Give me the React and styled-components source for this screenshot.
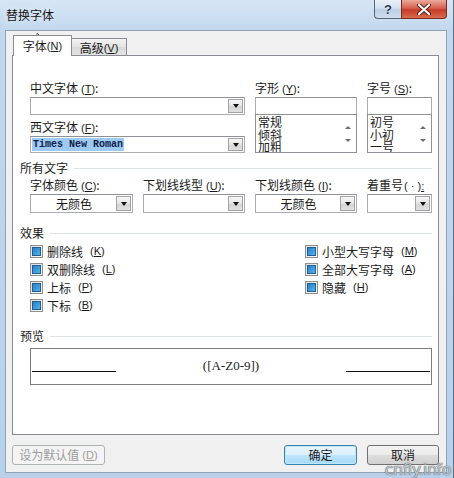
import React from 'react';
import styled, { createGlobalStyle, css } from 'styled-components';

const GlobalStyle = createGlobalStyle`
  html, body {
    margin: 0;
    padding: 0;
    background: #b9d1ea;
  }
  * {
    box-sizing: border-box;
  }
`;

const ui = `"Noto Sans CJK SC", "Liberation Sans", sans-serif`;

const Window = styled.div`
  position: relative;
  width: 454px;
  height: 478px;
  overflow: hidden;
  background: linear-gradient(180deg, #d6e5f5 0%, #c3d8ee 30px, #b8d0ea 100%);
  border-right: 1px solid #5d728b;
  font-family: ${ui};
  font-size: 12px;
  color: #1b1b1b;
`;

const TitleBar = styled.div`
  height: 30px;
  display: flex;
  justify-content: space-between;
  align-items: flex-start;
  padding: 0 6px 0 6px;
`;

const Title = styled.div`
  margin-top: 7px;
  line-height: 16px;
  font-size: 12px;
  color: #141414;
  text-shadow: 0 0 6px #eef5fc;
`;

const Caption = styled.div`
  display: flex;
`;

const CaptionBtn = styled.div`
  height: 19px;
  border: 1px solid #56657a;
  border-top: none;
  display: flex;
  align-items: center;
  justify-content: center;
  ${p => p.$close ? css`
    width: 46px;
    border-radius: 0 0 4px 0;
    border-color: #7a2a22;
    background: linear-gradient(180deg, #e9a99b 0%, #d8614f 45%, #c63c27 55%, #d96c4f 100%);
  ` : css`
    width: 27px;
    border-right: none;
    border-radius: 0 0 0 4px;
    background: linear-gradient(180deg, #e9f0f8 0%, #d5e1ef 45%, #bccde3 55%, #cfdcec 100%);
    color: #2b3b52;
    font-family: "Liberation Sans", sans-serif;
    font-weight: bold;
    font-size: 13px;
    text-shadow: 0 0 2px #fff;
  `}
`;

const Client = styled.div`
  margin: 0 6px 0 5px;
  height: 443px;
  background: #f0f0f0;
  border: 1px solid #8ea2b8;
  padding: 4px 7px 0 6px;
`;

const Tabs = styled.div`
  height: 20px;
  display: flex;
  align-items: flex-end;
  padding-left: 1px;
  position: relative;
  z-index: 1;
`;

const Tab = styled.div`
  display: flex;
  align-items: center;
  justify-content: center;
  border: 1px solid #898c95;
  border-bottom: none;
  line-height: 16px;
  ${p => p.$active ? css`
    width: 59px;
    height: 21px;
    margin-bottom: -1px;
    background: #fff;
  ` : css`
    width: 56px;
    height: 17px;
    margin-left: -1px;
    padding-top: 1px;
    background: linear-gradient(180deg, #f3f3f3, #e3e3e3 50%, #d9d9d9 51%, #e4e4e4);
  `}
`;

const Paren = styled.span`
  font-family: "Liberation Sans", sans-serif;
  font-size: 11px;
  margin-left: ${p => p.$gap ?? 3}px;
  u {
    text-underline-offset: 1px;
  }
`;

const Panel = styled.div`
  height: 380px;
  background: #fff;
  border: 1px solid #898c95;
  padding: 24px 6px 0 7px;
`;

const FontGrid = styled.div`
  margin-left: 10px;
  display: grid;
  grid-template-columns: 215px 102px 65px;
  column-gap: 10px;
`;

const Column = styled.div`
  display: flex;
  flex-direction: column;
`;

const Label = styled.div`
  height: 16px;
  line-height: 16px;
  white-space: nowrap;
  margin-bottom: 1px;
  margin-top: ${p => p.$top || 0}px;
`;

const Field = styled.div`
  position: relative;
  height: ${p => p.$h || 18}px;
  border: 1px solid #abadb3;
  border-top-color: #8e9197;
  background: #fff;
  display: flex;
  align-items: center;
  padding: 0 1px;
`;

const Combo = styled(Field)`
  padding-right: 16px;
  justify-content: ${p => p.$center ? 'center' : 'flex-start'};
`;

const DropBtn = styled.span`
  position: absolute;
  right: 1px;
  top: 1px;
  bottom: 1px;
  width: 15px;
  border: 1px solid #a3a3a3;
  background: linear-gradient(180deg, #f7f7f7, #e4e4e4 50%, #d4d4d4 51%, #e0e0e0);
  display: flex;
  align-items: center;
  justify-content: center;
  &::after {
    content: '';
    border-left: 3px solid transparent;
    border-right: 3px solid transparent;
    border-top: 4px solid #111;
  }
`;

const Selected = styled.span`
  font-family: "Liberation Mono", monospace;
  font-weight: bold;
  font-size: 10px;
  line-height: 13px;
  background: #9ccaf0;
  color: #10204a;
  padding: 0 1px;
`;

const ListBox = styled.div`
  position: relative;
  height: 39px;
  margin-top: -1px;
  border: 1px solid #8e9197;
  background: #fff;
  padding: 1px 18px 0 2px;
  overflow: hidden;
`;

const ListItem = styled.div`
  font-size: 12px;
  line-height: 12.5px;
  white-space: nowrap;
`;

const Scroll = styled.div`
  position: absolute;
  right: 4px;
  top: 0;
  bottom: 0;
  width: 9px;
  display: flex;
  flex-direction: column;
  justify-content: space-around;
  align-items: center;
  padding: 6px 0 5px;
`;

const Arrow = styled.span`
  border-left: 3px solid transparent;
  border-right: 3px solid transparent;
  ${p => p.$up
    ? css`border-bottom: 3px solid #6d6d6d;`
    : css`border-top: 3px solid #6d6d6d;`}
`;

const Header = styled.div`
  display: flex;
  align-items: center;
  gap: 6px;
  height: 16px;
  line-height: 16px;
  margin-top: ${p => p.$top}px;
  &::after {
    content: '';
    flex: 1;
    height: 1px;
    background: #dde2e7;
  }
`;

const ColorGrid = styled.div`
  margin: 1px 0 0 10px;
  display: grid;
  grid-template-columns: 103px 102px 102px 65px;
  column-gap: 10px;
`;

const Effects = styled.div`
  margin: 1px 0 0 10px;
  display: grid;
  grid-template-columns: 275px 1fr;
  grid-auto-flow: column;
  grid-template-rows: repeat(4, 18px);
`;

const Check = styled.div`
  display: flex;
  align-items: center;
  gap: 4px;
  white-space: nowrap;
  grid-column: ${p => p.$col};
`;

const Box = styled.span`
  width: 13px;
  height: 13px;
  border: 1px solid #8f8f8f;
  background: linear-gradient(135deg, #dedede, #fbfbfb);
  display: flex;
  align-items: center;
  justify-content: center;
  &::after {
    content: '';
    width: 7px;
    height: 7px;
    border: 1px solid #1f5f94;
    background: linear-gradient(135deg, #2b7fc4, #4fb3ec);
  }
`;

const Preview = styled.div`
  margin: 4px 0 0 10px;
  height: 37px;
  border: 1px solid #7c7c7c;
  background: #fff;
  display: grid;
  grid-template-columns: 84px 1fr 84px;
  align-items: center;
  padding: 0 1px;
`;

const Rule = styled.div`
  height: 1px;
  background: #111;
  margin-top: 10px;
`;

const Sample = styled.div`
  text-align: center;
  font-family: "Liberation Serif", serif;
  font-size: 13px;
  color: #222;
  margin-top: -1px;
`;

const ButtonRow = styled.div`
  display: flex;
  align-items: center;
  gap: 10px;
  margin-top: 10px;
`;

const Button = styled.div`
  width: ${p => p.$w}px;
  height: 20px;
  border-radius: 3px;
  border: 1px solid #707070;
  background: linear-gradient(180deg, #f3f3f3, #ebebeb 50%, #dddddd 51%, #d0d0d0);
  display: flex;
  align-items: center;
  justify-content: center;
  line-height: 16px;
  ${p => p.$first && css`margin-right: auto;`}
  ${p => p.$disabled && css`
    color: #9c9c9c;
    border-color: #adb2b5;
    background: #f4f4f4;
  `}
  ${p => p.$default && css`
    border-color: #3c7fb1;
    box-shadow: inset 0 0 0 1px #bfe5f8;
    background: linear-gradient(180deg, #eaf6fd, #d9f0fc 50%, #bee6fd 51%, #a7d9f5);
  `}
`;

const Cursor = styled.svg`
  position: absolute;
  left: 36px;
  top: 32px;
  opacity: 0.8;
`;

const Watermark = styled.div`
  position: absolute;
  right: 2px;
  bottom: -1px;
  font-family: "DejaVu Sans", sans-serif;
  font-size: 16px;
  line-height: 18px;
  color: #c0c4ca;
  text-shadow: 0 0 1px #5f6770, 0 0 1px #5f6770;
  letter-spacing: -0.5px;
`;

const Mn = ({ k, gap }) => <Paren $gap={gap}>(<u>{k}</u>)</Paren>;

const Dialog = () => (
  <Window>
    <TitleBar>
      <Title>替换字体</Title>
      <Caption>
        <CaptionBtn>?</CaptionBtn>
        <CaptionBtn $close>
          <svg width="14" height="11" viewBox="0 0 14 11">
            <path d="M2 1 L12 10 M12 1 L2 10" stroke="#4d1a14" strokeWidth="4" strokeLinecap="round" />
            <path d="M2 1 L12 10 M12 1 L2 10" stroke="#fff" strokeWidth="2.2" strokeLinecap="round" />
          </svg>
        </CaptionBtn>
      </Caption>
    </TitleBar>
    <Client>
      <Tabs>
        <Tab $active>字体<Mn k="N" gap={0} /></Tab>
        <Tab>高级<Mn k="V" gap={0} /></Tab>
      </Tabs>
      <Panel>
        <FontGrid>
          <Column>
            <Label>中文字体<Mn k="T" />:</Label>
            <Combo><DropBtn /></Combo>
            <Label $top={4}>西文字体<Mn k="F" />:</Label>
            <Combo $h={17}><Selected>Times New Roman</Selected><DropBtn /></Combo>
          </Column>
          <Column>
            <Label>字形<Mn k="Y" />:</Label>
            <Field />
            <ListBox>
              <ListItem>常规</ListItem>
              <ListItem>倾斜</ListItem>
              <ListItem>加粗</ListItem>
              <Scroll><Arrow $up /><Arrow /></Scroll>
            </ListBox>
          </Column>
          <Column>
            <Label>字号<Mn k="S" />:</Label>
            <Field />
            <ListBox>
              <ListItem>初号</ListItem>
              <ListItem>小初</ListItem>
              <ListItem>一号</ListItem>
              <Scroll><Arrow $up /><Arrow /></Scroll>
            </ListBox>
          </Column>
        </FontGrid>

        <Header $top={7}>所有文字</Header>
        <ColorGrid>
          <Column>
            <Label>字体颜色<Mn k="C" />:</Label>
            <Combo $h={19} $center>无颜色<DropBtn /></Combo>
          </Column>
          <Column>
            <Label>下划线线型<Mn k="U" />:</Label>
            <Combo $h={19}><DropBtn /></Combo>
          </Column>
          <Column>
            <Label>下划线颜色<Mn k="I" />:</Label>
            <Combo $h={19} $center>无颜色<DropBtn /></Combo>
          </Column>
          <Column>
            <Label>着重号<Paren $gap={1}>( · )<u>:</u></Paren></Label>
            <Combo $h={19}><DropBtn /></Combo>
          </Column>
        </ColorGrid>

        <Header $top={12}>效果</Header>
        <Effects>
          <Check $col={1}><Box />删除线<Mn k="K" /></Check>
          <Check $col={1}><Box />双删除线<Mn k="L" /></Check>
          <Check $col={1}><Box />上标<Mn k="P" /></Check>
          <Check $col={1}><Box />下标<Mn k="B" /></Check>
          <Check $col={2}><Box />小型大写字母<Mn k="M" /></Check>
          <Check $col={2}><Box />全部大写字母<Mn k="A" /></Check>
          <Check $col={2}><Box />隐藏<Mn k="H" /></Check>
        </Effects>

        <Header $top={14}>预览</Header>
        <Preview>
          <Rule />
          <Sample>([A-Z0-9])</Sample>
          <Rule />
        </Preview>
      </Panel>
      <ButtonRow>
        <Button $w={93} $first $disabled>设为默认值<Mn k="D" /></Button>
        <Button $w={73} $default>确定</Button>
        <Button $w={72}>取消</Button>
      </ButtonRow>
    </Client>
    <Cursor width="14" height="22" viewBox="0 0 14 22">
      <path d="M1 1 L1 17 L5 13 L8 20 L10 19 L7 12 L12 12 Z" fill="#fff" stroke="#444" strokeWidth="1" strokeLinejoin="round" />
    </Cursor>
    <Watermark>cnfly.info</Watermark>
  </Window>
);

export default function App() {
  return (
    <>
      <GlobalStyle />
      <Dialog />
    </>
  );
}
